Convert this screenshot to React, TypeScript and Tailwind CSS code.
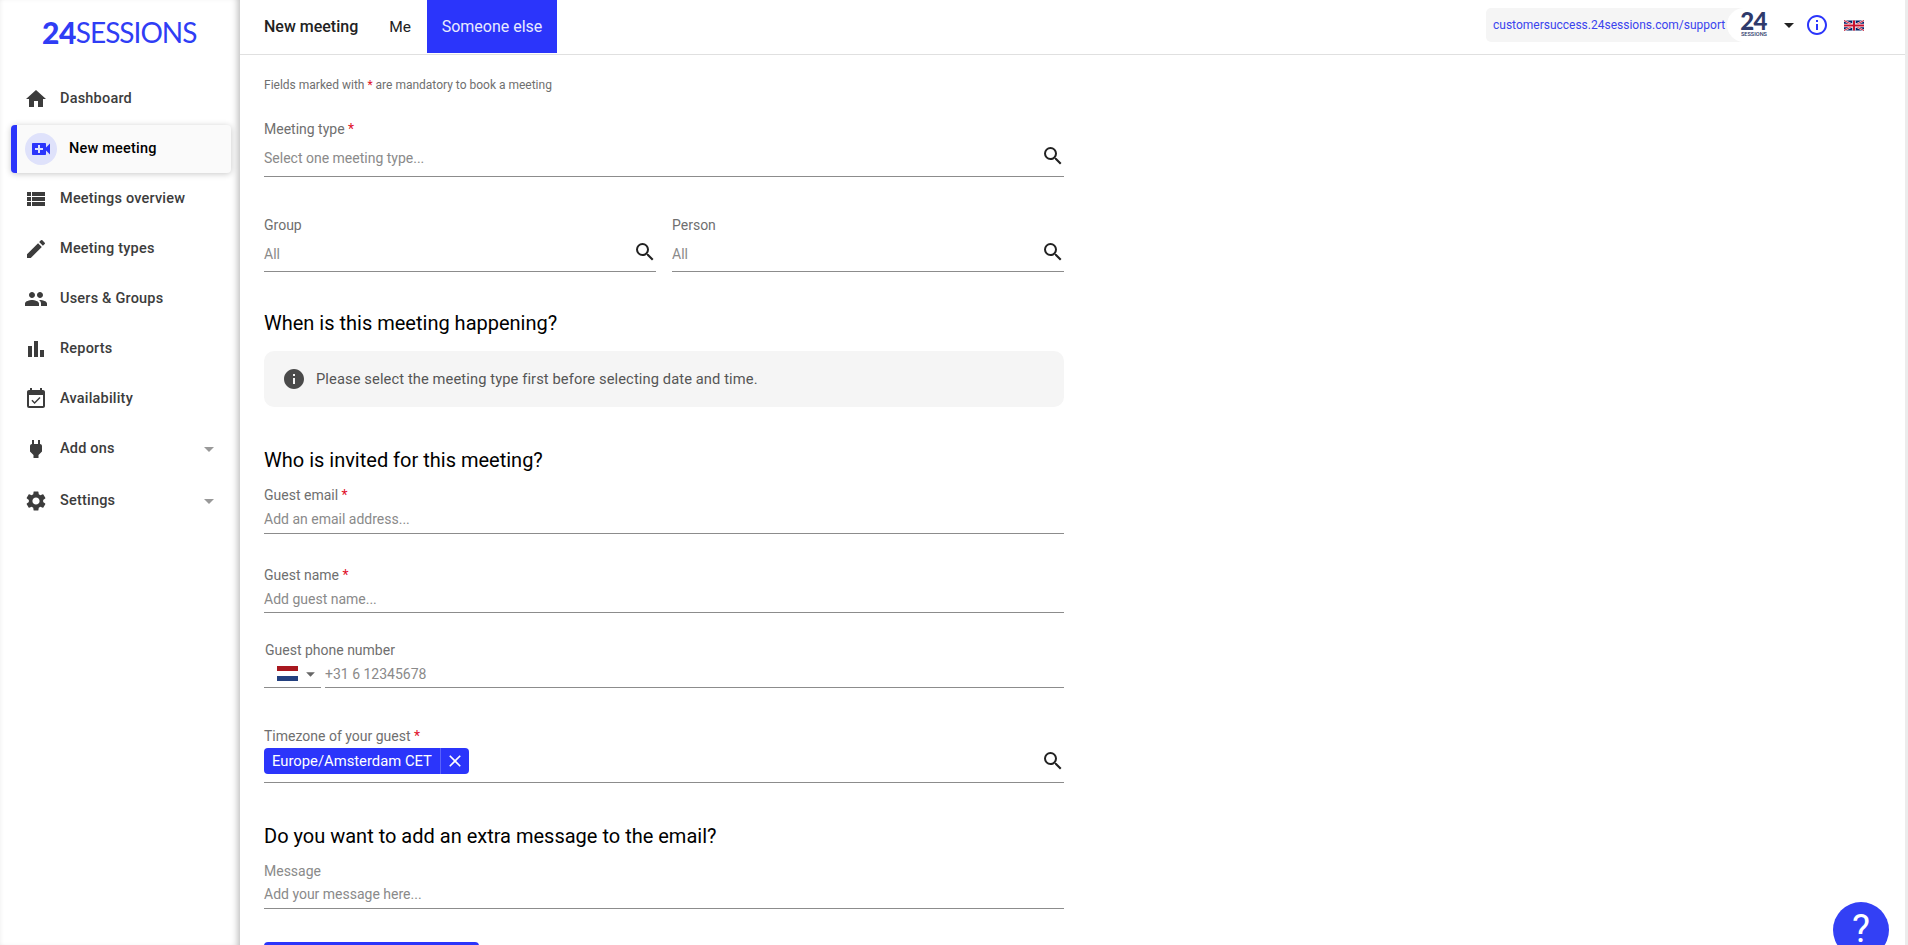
import {
  MdArrowDropDown,
  MdBarChart,
  MdClose,
  MdEdit,
  MdEventAvailable,
  MdHome,
  MdInfo,
  MdOutlineInfo,
  MdPeople,
  MdPower,
  MdSearch,
  MdSettings,
  MdVideoCall,
  MdViewList,
} from "react-icons/md";
import type { IconType } from "react-icons";

const navItems: { label: string; icon: IconType; caret?: boolean; rowClass: string }[] = [
  { label: "Dashboard", icon: MdHome, rowClass: "h-[50px]" },
  { label: "Meetings overview", icon: MdViewList, rowClass: "h-[50px]" },
  { label: "Meeting types", icon: MdEdit, rowClass: "h-[50px]" },
  { label: "Users & Groups", icon: MdPeople, rowClass: "h-[50px]" },
  { label: "Reports", icon: MdBarChart, rowClass: "h-[50px]" },
  { label: "Availability", icon: MdEventAvailable, rowClass: "h-[50px]" },
  { label: "Add ons", icon: MdPower, caret: true, rowClass: "h-[50px]" },
  { label: "Settings", icon: MdSettings, caret: true, rowClass: "h-[54px]" },
];

function NavRow({ item }: { item: (typeof navItems)[number] }) {
  const Icon = item.icon;
  return (
    <div className={`flex items-center pl-[24px] pr-[19px] text-[#3c3c3c] ${item.rowClass}`}>
      <Icon className="w-[24px] h-[24px] shrink-0" />
      <span className="ml-[12px] text-[14.5px] font-medium tracking-[0.2px]">{item.label}</span>
      {item.caret && <MdArrowDropDown className="ml-auto w-[24px] h-[24px] text-[#999]" />}
    </div>
  );
}

function Sidebar() {
  return (
    <aside className="w-[240px] shrink-0 bg-white shadow-[inset_-7px_0_7px_-5px_rgba(0,0,0,0.28),inset_4px_0_5px_-4px_rgba(0,0,0,0.08)]">
      <div className="h-[74px] pt-[18px] pl-[42px] text-[#2f3df5] flex items-start font-['Lato',sans-serif] leading-[28px]">
        <span className="text-[30px] font-black tracking-[-0.5px]">24</span>
        <span className="text-[28px] font-normal tracking-[-1px]">SESSIONS</span>
      </div>
      <NavRow item={navItems[0]} />
      <div className="mt-[1px] ml-[11px] mr-[9px] h-[48px] mb-[1px] flex items-center rounded-[4px] border-l-[6px] border-[#2b35fb] bg-[#fafafa] shadow-[0_1px_6px_rgba(0,0,0,0.22)]">
        <div className="ml-[8px] w-[32px] h-[32px] rounded-full bg-[#dfe2fb] flex items-center justify-center">
          <MdVideoCall className="w-[24px] h-[24px] text-[#2b35fb]" />
        </div>
        <span className="ml-[12px] text-[14.5px] font-medium text-black tracking-[0.2px]">New meeting</span>
      </div>
      {navItems.slice(1).map((item) => (
        <NavRow key={item.label} item={item} />
      ))}
    </aside>
  );
}

function Header() {
  return (
    <header className="h-[55px] shrink-0 border-b border-[#e0e0e0] flex items-start pl-[24px] bg-white">
      <span className="mt-[15px] text-[16px] font-medium text-[#222]">New meeting</span>
      <span className="mt-[16px] ml-[31px] text-[15.5px] text-[#222]">Me</span>
      <div className="ml-[16px] w-[130px] h-[53px] bg-[#2b35fb] text-[#e8eaff] text-[16px] flex items-center justify-center">
        Someone else
      </div>
      <div className="ml-auto mt-[8px] flex items-center">
        <div className="w-[260px] h-[34px] rounded-[5px] bg-[#f5f5f5] flex items-center pl-[7px]">
          <span className="text-[12px] text-[#3a44ee] whitespace-nowrap">customersuccess.24sessions.com/support</span>
        </div>
        <div className="-ml-[19px] w-[40px] h-[34px] rounded-l-full bg-white relative flex flex-col items-end leading-none text-[#2f3a6b]">
          <span className="text-[24px] font-black font-['Lato',sans-serif] leading-[20px] mt-[3px] tracking-[-0.5px]">24</span>
          <span className="text-[5.6px] leading-[7px] font-medium">SESSIONS</span>
        </div>
        <MdArrowDropDown className="ml-[10px] w-[24px] h-[24px] text-[#222]" />
        <MdOutlineInfo className="ml-[4px] w-[24px] h-[24px] text-[#2b35fb]" />
        <svg viewBox="0 0 60 30" className="ml-[15px] w-[20px] h-[11px] shrink-0">
          <rect width="60" height="30" fill="#012169" />
          <path d="M0 0L60 30M60 0L0 30" stroke="#fff" strokeWidth="6" />
          <path d="M0 0L60 30M60 0L0 30" stroke="#C8102E" strokeWidth="3" />
          <path d="M30 0V30M0 15H60" stroke="#fff" strokeWidth="10" />
          <path d="M30 0V30M0 15H60" stroke="#C8102E" strokeWidth="6" />
        </svg>
        <div className="w-[41px]" />
      </div>
    </header>
  );
}

function Star() {
  return <span className="text-[#e0102a]"> *</span>;
}

function Underlined({
  placeholder,
  search,
  className = "",
}: {
  placeholder: string;
  search?: boolean;
  className?: string;
}) {
  return (
    <div className={`flex items-center border-b border-[#8c8c8c] text-[14px] text-[#8a8a8a] ${className}`}>
      <span className="pt-[1px]">{placeholder}</span>
      {search && <MdSearch className="ml-auto -mr-[1px] -mt-[4px] w-[24px] h-[24px] text-[#222]" />}
    </div>
  );
}

function Label({ text, star, className = "" }: { text: string; star?: boolean; className?: string }) {
  return (
    <div className={`text-[14px] leading-[16px] text-[#6f6f6f] ${className}`}>
      {text}
      {star && <Star />}
    </div>
  );
}

function Heading({ text, className = "" }: { text: string; className?: string }) {
  return <h2 className={`text-[20px] leading-[24px] font-normal text-black ${className}`}>{text}</h2>;
}

function MeetingForm() {
  return (
    <div className="w-[800px] ml-[24px]">
      <p className="mt-[23px] text-[12px] leading-[14px] text-[#6f6f6f]">
        Fields marked with <span className="text-[#e0102a]">*</span> are mandatory to book a meeting
      </p>

      <Label text="Meeting type" star className="mt-[29px]" />
      <Underlined placeholder="Select one meeting type..." search className="h-[39px] mt-[1px] pt-[2px]" />

      <div className="mt-[40px] flex gap-[16px]">
        <div className="flex-1">
          <Label text="Group" />
          <Underlined placeholder="All" search className="h-[38px] mt-[1px] pt-[2px]" />
        </div>
        <div className="flex-1">
          <Label text="Person" />
          <Underlined placeholder="All" search className="h-[38px] mt-[1px] pt-[2px]" />
        </div>
      </div>

      <Heading text="When is this meeting happening?" className="mt-[39px]" />
      <div className="mt-[16px] h-[56px] rounded-[10px] bg-[#f5f5f5] flex items-center pl-[18px] text-[14.7px] text-[#555]">
        <MdInfo className="w-[24px] h-[24px] text-[#4a4a4a]" />
        <span className="ml-[10px] tracking-[0.1px]">Please select the meeting type first before selecting date and time.</span>
      </div>

      <Heading text="Who is invited for this meeting?" className="mt-[41px]" />
      <Label text="Guest email" star className="mt-[15px]" />
      <Underlined placeholder="Add an email address..." className="h-[31px] pt-[2px]" />

      <Label text="Guest name" star className="mt-[33px]" />
      <Underlined placeholder="Add guest name..." className="h-[30px] pt-[2px]" />

      <Label text="Guest phone number" className="mt-[29px] ml-[1px]" />
      <div className="flex gap-[4px] mt-[2px]">
        <div className="w-[57px] h-[28px] border-b border-[#8c8c8c] flex items-center pl-[13px]">
          <svg viewBox="0 0 21 15" className="w-[21px] h-[15px] shrink-0">
            <rect width="21" height="5" fill="#a8181f" />
            <rect y="5" width="21" height="5" fill="#fff" />
            <rect y="10" width="21" height="5" fill="#23407f" />
          </svg>
          <MdArrowDropDown className="ml-[2px] w-[24px] h-[24px] text-[#666]" />
        </div>
        <Underlined placeholder="+31 6 12345678" className="flex-1 h-[28px]" />
      </div>

      <Label text="Timezone of your guest" star className="mt-[40px]" />
      <div className="mt-[4px] h-[35px] border-b border-[#8c8c8c] flex items-start">
        <div className="h-[26px] rounded-[4px] bg-[#2b35fb] text-white text-[14.8px] flex items-center">
          <span className="px-[8px] h-full leading-[26px] border-r border-[#5a62fb]">Europe/Amsterdam CET</span>
          <MdClose className="mx-[3px] w-[22px] h-[20px]" />
        </div>
        <MdSearch className="ml-auto -mr-[1px] mt-[1px] w-[24px] h-[24px] text-[#222]" />
      </div>

      <Heading text="Do you want to add an extra message to the email?" className="mt-[41px]" />
      <Label text="Message" className="mt-[15px] text-[#8a8a8a]" />
      <Underlined placeholder="Add your message here..." className="h-[30px]" />

      <button className="mt-[33px] block w-[215px] h-[44px] rounded-[4px] bg-[#2b35fb]" />
    </div>
  );
}

export default function App() {
  return (
    <div className="h-screen w-full overflow-hidden flex bg-white font-['Roboto',sans-serif] relative">
      <Sidebar />
      <main className="flex-1 min-w-0 flex flex-col">
        <Header />
        <MeetingForm />
      </main>
      <div className="w-[3px] shrink-0 bg-[#ececec]" />
      <div className="absolute right-[19px] top-[902px] w-[56px] h-[56px] rounded-full bg-[#3340f5] flex items-start justify-center text-white text-[38px] font-normal leading-[54px]">
        ?
      </div>
    </div>
  );
}
